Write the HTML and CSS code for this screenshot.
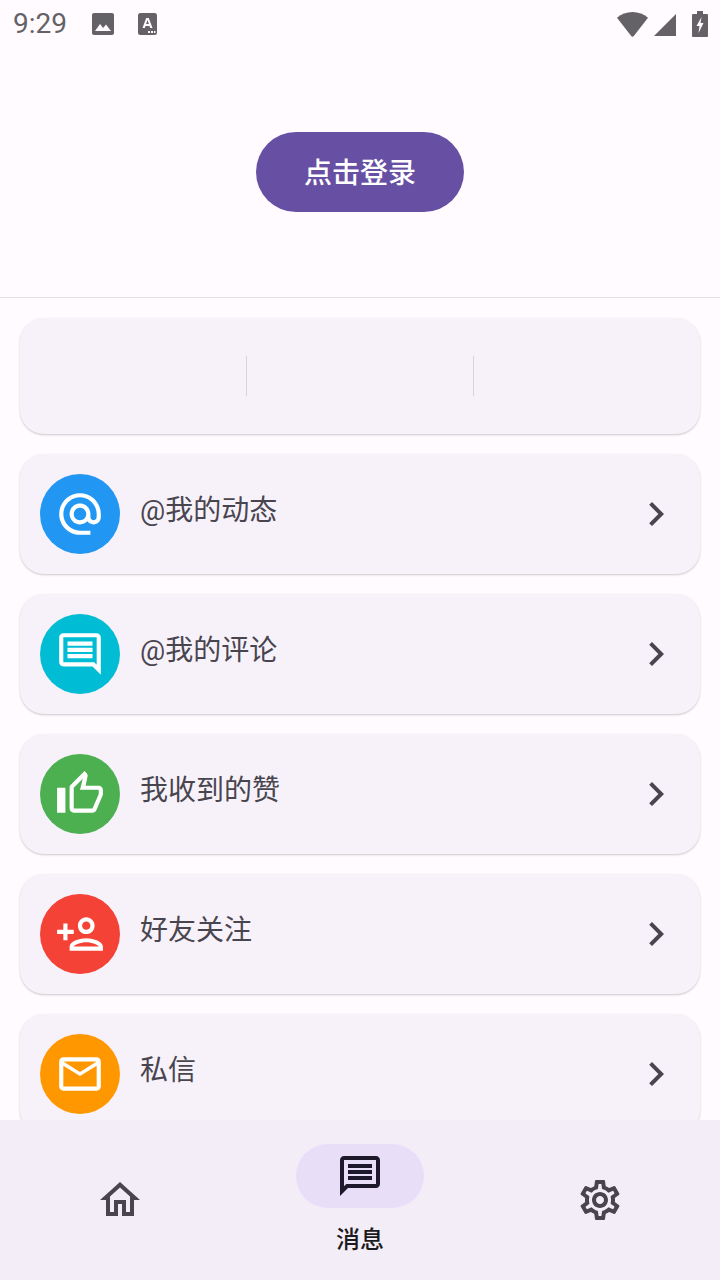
FILE: index.html
```html
<!DOCTYPE html>
<html lang="zh">
<head>
<meta charset="utf-8">
<title>消息</title>
<link rel="stylesheet" href="styles.css">
</head>
<body>
<div class="app">
  <div class="status">
    <span class="time">9:29</span>
    <svg class="st-img" viewBox="0 0 22 22"><path fill="#656267" d="M2 0h18a2 2 0 0 1 2 2v18a2 2 0 0 1-2 2H2a2 2 0 0 1-2-2V2a2 2 0 0 1 2-2z"/><path fill="#fffbfe" d="M3 18l5-7 3.2 4 2.8-3.5L19 18z"/></svg>
    <svg class="st-a" viewBox="0 0 19 22"><rect width="19" height="22" rx="2.5" fill="#656267"/><path fill="#fffbfe" d="M4.500 15L8.200 5h2.600l3.700 10h-2.300l-.7-2H7.500l-.7 2zM8.100 11h2.800L9.500 7z"/><path fill="#fffbfe" d="M10 18h2v2h-2zM13 18h2v2h-2zM16 18h1.500v2H16z"/></svg>
    <span class="spacer"></span>
    <svg class="st-wifi" viewBox="0 0 31 25"><path fill="#656267" d="M15.500 0C9.500 0 4.300 2.200 0 5.700L14.200 23.900a1.700 1.700 0 0 0 2.600 0L31 5.700C26.700 2.200 21.500 0 15.500 0z"/></svg>
    <svg class="st-sig" viewBox="0 0 22 22"><path fill="#656267" d="M22 0v22H0z"/></svg>
    <svg class="st-bat" viewBox="0 0 16 26"><path fill="#656267" d="M5 0h6v3h4a1 1 0 0 1 1 1v21a1 1 0 0 1-1 1H1a1 1 0 0 1-1-1V4a1 1 0 0 1 1-1h4z"/><path fill="#fffbfe" d="M9.500 6L4.500 15h3l-1 7 5-10h-3z"/></svg>
  </div>
  <header class="top">
    <button class="login">点击登录</button>
  </header>
  <main class="list">
    <section class="card stats">
      <div class="stat"></div>
      <div class="stat"></div>
      <div class="stat"></div>
    </section>
    <section class="card row">
      <span class="badge blue"><svg class="ic" viewBox="0 0 24 24"><path d="M12 2C6.480 2 2 6.480 2 12s4.480 10 10 10h5v-2h-5c-4.340 0-8-3.660-8-8s3.660-8 8-8 8 3.660 8 8v1.430c0 .79-.71 1.570-1.500 1.570s-1.500-.78-1.500-1.570V12c0-2.760-2.240-5-5-5s-5 2.240-5 5 2.240 5 5 5c1.380 0 2.640-.56 3.540-1.470.65.89 1.770 1.470 2.960 1.470 1.970 0 3.500-1.600 3.500-3.570V12c0-5.520-4.480-10-10-10zm0 13c-1.660 0-3-1.340-3-3s1.340-3 3-3 3 1.340 3 3-1.340 3-3 3z"/></svg></span>
      <span class="label">@我的动态</span>
      <svg class="chev" viewBox="0 0 24 24"><path d="M10 6L8.590 7.410 13.170 12l-4.580 4.590L10 18l6-6z"/></svg>
    </section>
    <section class="card row">
      <span class="badge cyan"><svg class="ic" viewBox="0 0 24 24"><path d="M21.990 4c0-1.100-.89-2-1.990-2H4c-1.100 0-2 .9-2 2v12c0 1.100.9 2 2 2h14l4 4-.01-18zM20 4v13.170L18.830 16H4V4h16zM6 12h12v2H6zm0-3h12v2H6zm0-3h12v2H6z"/></svg></span>
      <span class="label">@我的评论</span>
      <svg class="chev" viewBox="0 0 24 24"><path d="M10 6L8.590 7.410 13.170 12l-4.580 4.590L10 18l6-6z"/></svg>
    </section>
    <section class="card row">
      <span class="badge green"><svg class="ic" viewBox="0 0 24 24"><path d="M9 21h9c.83 0 1.540-.5 1.840-1.220l3.020-7.050c.09-.23.14-.47.14-.73v-2c0-1.100-.9-2-2-2h-6.310l.95-4.570.03-.32c0-.41-.17-.79-.44-1.060L14.170 1 7.580 7.590C7.220 7.950 7 8.450 7 9v10c0 1.100.9 2 2 2zM9 9l4.340-4.340L12 10h9v2l-3 7H9V9zM1 9h4v12H1z"/></svg></span>
      <span class="label">我收到的赞</span>
      <svg class="chev" viewBox="0 0 24 24"><path d="M10 6L8.590 7.410 13.170 12l-4.580 4.590L10 18l6-6z"/></svg>
    </section>
    <section class="card row">
      <span class="badge red"><svg class="ic" viewBox="0 0 24 24"><path d="M15 12c2.210 0 4-1.790 4-4s-1.790-4-4-4-4 1.790-4 4 1.790 4 4 4zm0-6c1.100 0 2 .9 2 2s-.9 2-2 2-2-.9-2-2 .9-2 2-2zm0 8c-2.670 0-8 1.340-8 4v2h16v-2c0-2.660-5.330-4-8-4zm-6 4c.22-.72 3.310-2 6-2 2.700 0 5.800 1.290 6 2H9zm-3-3v-3h3v-2H6V7H4v3H1v2h3v3z"/></svg></span>
      <span class="label">好友关注</span>
      <svg class="chev" viewBox="0 0 24 24"><path d="M10 6L8.590 7.410 13.170 12l-4.580 4.590L10 18l6-6z"/></svg>
    </section>
    <section class="card row">
      <span class="badge orange"><svg class="ic" viewBox="0 0 24 24"><path d="M22 6c0-1.100-.9-2-2-2H4c-1.100 0-2 .9-2 2v12c0 1.100.9 2 2 2h16c1.100 0 2-.9 2-2V6zm-2 0l-8 5-8-5h16zm0 12H4V8l8 5 8-5v10z"/></svg></span>
      <span class="label">私信</span>
      <svg class="chev" viewBox="0 0 24 24"><path d="M10 6L8.590 7.410 13.170 12l-4.580 4.590L10 18l6-6z"/></svg>
    </section>
  </main>
  <nav class="nav">
    <div class="tab">
      <svg class="nav-ic" viewBox="0 0 24 24"><path d="M12 5.690l5 4.500V18h-2v-6H9v6H7v-7.810l5-4.500M12 3L2 12h3v8h6v-6h2v6h6v-8h3L12 3z"/></svg>
    </div>
    <div class="tab active">
      <span class="pill"><svg class="nav-ic" viewBox="0 0 24 24"><path d="M4 4h16v12H5.170L4 17.170V4m0-2c-1.100 0-1.990.9-1.990 2L2 22l4-4h14c1.100 0 2-.9 2-2V4c0-1.100-.9-2-2-2H4zm2 10h12v2H6v-2zm0-3h12v2H6V9zm0-3h12v2H6V6z"/></svg></span>
      <span class="tab-label">消息</span>
    </div>
    <div class="tab">
      <svg class="nav-ic" viewBox="0 0 24 24"><path d="M19.430 12.980c.04-.32.07-.64.07-.98 0-.34-.03-.66-.07-.98l2.110-1.650c.19-.15.24-.42.12-.64l-2-3.460c-.09-.16-.26-.25-.44-.25-.06 0-.12.01-.17.03l-2.490 1c-.52-.4-1.080-.73-1.690-.98l-.38-2.650C14.460 2.180 14.250 2 14 2h-4c-.25 0-.46.18-.49.42l-.38 2.650c-.61.25-1.170.59-1.690.98l-2.490-1c-.06-.02-.12-.03-.18-.03-.17 0-.34.09-.43.25l-2 3.460c-.13.22-.07.49.12.64l2.110 1.650c-.04.32-.07.65-.07.98 0 .33.03.66.07.98l-2.110 1.650c-.19.15-.24.42-.12.64l2 3.460c.09.16.26.25.44.25.06 0 .12-.01.17-.03l2.490-1c.52.4 1.080.73 1.690.98l.38 2.650c.03.24.24.42.49.42h4c.25 0 .46-.18.49-.42l.38-2.650c.61-.25 1.170-.59 1.690-.98l2.490 1c.06.02.12.03.18.03.17 0 .34-.09.43-.25l2-3.460c.12-.22.07-.49-.12-.64l-2.110-1.650zm-1.980-1.710c.04.31.05.52.05.73 0 .21-.02.43-.05.73l-.14 1.130.89.7 1.080.84-.7 1.210-1.270-.51-1.040-.42-.9.68c-.43.32-.84.56-1.250.73l-1.060.43-.16 1.130-.2 1.350h-1.400l-.19-1.350-.16-1.130-1.060-.43c-.43-.18-.83-.41-1.230-.71l-.91-.7-1.060.43-1.270.51-.7-1.210 1.080-.84.89-.7-.14-1.130c-.03-.31-.05-.54-.05-.74s.02-.43.05-.73l.14-1.130-.89-.7-1.080-.84.7-1.210 1.270.51 1.040.42.9-.68c.43-.32.84-.56 1.250-.73l1.060-.43.16-1.130.2-1.350h1.390l.19 1.350.16 1.130 1.060.43c.43.18.83.41 1.230.71l.91.7 1.060-.43 1.270-.51.7 1.210-1.070.85-.89.7.14 1.130zM12 8c-2.210 0-4 1.790-4 4s1.790 4 4 4 4-1.790 4-4-1.790-4-4-4zm0 6c-1.100 0-2-.9-2-2s.9-2 2-2 2 .9 2 2-.9 2-2 2z"/></svg>
    </div>
  </nav>
</div>
</body>
</html>
```

FILE: styles.css
```css
* { box-sizing: border-box; }
html, body { margin: 0; padding: 0; }
body {
  width: 720px;
  height: 1280px;
  overflow: hidden;
  background: #fffbfe;
  font-family: Roboto, "Noto Sans CJK SC", sans-serif;
}
.app {
  display: flex;
  flex-direction: column;
  height: 1280px;
}
.status {
  display: flex;
  align-items: center;
  height: 48px;
  padding: 0 12px 0 13px;
  flex: none;
}
.time {
  font-size: 28px;
  line-height: 48px;
  color: #656267;
  width: 79px;
}
.st-img { width: 22px; height: 22px; margin-right: 24px; }
.st-a { width: 19px; height: 22px; }
.spacer { flex: 1; }
.st-wifi { width: 31px; height: 25px; margin-right: 6px; }
.st-sig { width: 22px; height: 22px; margin-right: 16px; margin-top: 2px; }
.st-bat { width: 16px; height: 26px; }
.top {
  flex: none;
  height: 250px;
  border-bottom: 1px solid #e6e0e9;
  display: flex;
  justify-content: center;
  padding-top: 84px;
}
.login {
  width: 208px;
  height: 80px;
  border: 0;
  border-radius: 40px;
  background: #6750a4;
  color: #fff;
  font: 500 28px/36px Roboto, "Noto Sans CJK SC", sans-serif;
  padding: 4px 0 0;
}
.list {
  flex: 1;
  min-height: 0;
  overflow: hidden;
  padding: 20px 20px 0;
  display: flex;
  flex-direction: column;
  gap: 20px;
}
.card {
  flex: none;
  background: #f7f2fa;
  border-radius: 24px;
  box-shadow: 0 1px 2px rgba(0, 0, 0, .16), 0 1px 3px rgba(0, 0, 0, .06);
}
.stats {
  height: 116px;
  display: flex;
  align-items: center;
}
.stat {
  flex: 1;
  height: 40px;
}
.stat + .stat { border-left: 1px solid #d6d3da; }
.row {
  height: 120px;
  display: flex;
  align-items: center;
  padding: 0 20px;
}
.badge {
  width: 80px;
  height: 80px;
  border-radius: 50%;
  display: flex;
  align-items: center;
  justify-content: center;
  flex: none;
}
.ic { width: 50px; height: 50px; fill: #fff; flex: none; }
.blue { background: #2196f3; }
.cyan { background: #00bcd4; }
.green { background: #4caf50; }
.red { background: #f44336; }
.orange { background: #ff9800; }
.label {
  flex: 1;
  margin-left: 20px;
  padding-bottom: 6px;
  font-size: 28px;
  line-height: 40px;
  color: #49454f;
}
.chev { width: 48px; height: 48px; fill: #49454f; flex: none; }
.nav {
  flex: none;
  height: 160px;
  background: #f3edf7;
  display: flex;
}
.tab {
  flex: 1;
  display: flex;
  flex-direction: column;
  align-items: center;
  justify-content: center;
}
.tab.active { justify-content: flex-start; padding-top: 24px; }
.nav-ic { width: 48px; height: 48px; fill: #49454f; display: block; }
.pill {
  width: 128px;
  height: 64px;
  border-radius: 32px;
  background: #e8def8;
  display: flex;
  align-items: center;
  justify-content: center;
}
.pill .nav-ic { fill: #1d192b; }
.tab-label {
  margin-top: 14px;
  font-size: 24px;
  line-height: 36px;
  font-weight: 500;
  color: #1d1b20;
}
```
